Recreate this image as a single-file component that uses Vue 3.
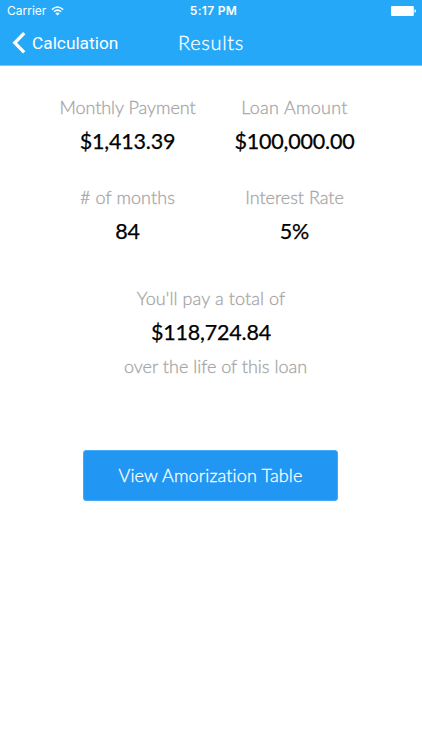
<script setup>
const stats = [
    { label: 'Monthly Payment', value: '$1,413.39', name: 'payment' },
    { label: 'Loan Amount', value: '$100,000.00', name: 'amount' },
    { label: '# of months', value: '84', name: 'months' },
    { label: 'Interest Rate', value: '5%', name: 'rate' }
]
</script>

<template>
    <div class="screen">
        <header class="topBar">
            <div class="statusBar">
                <div class="carrier">
                    <span>Carrier</span>
                    <svg class="wifi" width="13" height="10" viewBox="0 0 13 10">
                        <path d="M0.9 3.6 Q6.5 -1.5 12.1 3.6" />
                        <path d="M2.9 5.8 Q6.5 2.5 10.1 5.8" />
                        <path class="dot" d="M4.4 7.4 Q6.5 5.6 8.6 7.4 L6.5 9.6 Z" />
                    </svg>
                </div>
                <span class="clock">5:17 PM</span>
                <div class="power">
                    <svg width="25" height="10" viewBox="0 0 25 10">
                        <rect x="0" y="0" width="22.8" height="10" rx="1" />
                        <path d="M23.5 3.3 Q25 3.5 25 5 Q25 6.5 23.5 6.7 Z" />
                    </svg>
                </div>
            </div>
            <nav class="navBar">
                <a class="back">
                    <svg width="14" height="22" viewBox="0 0 14 22">
                        <path d="M12.2 1.2 L2.8 10.8 L12.2 20.4" />
                    </svg>
                    <span>Calculation</span>
                </a>
                <h1 class="title">Results</h1>
                <span></span>
            </nav>
        </header>

        <main class="content">
            <section class="stats">
                <div v-for="stat in stats" :key="stat.name" class="stat">
                    <div class="label" :class="stat.name">{{ stat.label }}</div>
                    <div class="value">{{ stat.value }}</div>
                </div>
            </section>

            <section class="total">
                <div class="label before">You'll pay a total of</div>
                <div class="value">$118,724.84</div>
                <div class="label after">over the life of this loan</div>
            </section>

            <button class="tableButton">View Amorization Table</button>
        </main>
    </div>
</template>

<style>
body {
    background: #fff;
}
</style>

<style scoped>
.screen {
    height: 750px;
    overflow: hidden;
    background: #fff;
    font-family: Lato, "Liberation Sans", sans-serif;
}

.topBar {
    box-sizing: border-box;
    height: 66px;
    background: #25a8f7;
    border-bottom: 1px solid #7accfb;
    color: #fff;
}
.statusBar {
    height: 21px;
    padding: 0 6px 0 7px;
    display: grid;
    grid-template-columns: 1fr auto 1fr;
    align-items: center;
    font-family: Inter, sans-serif;
    font-size: 12px;
}
.carrier {
    display: flex;
    align-items: center;
    gap: 5px;
    letter-spacing: 0;
}
.wifi {
    fill: none;
    stroke: #fff;
    stroke-width: 1.5;
}
.wifi .dot {
    fill: #fff;
    stroke: none;
}
.clock {
    padding-left: 4px;
    font-weight: 600;
    letter-spacing: 0.3px;
}
.power {
    display: flex;
    justify-content: flex-end;
    fill: #fff;
}

.navBar {
    height: 44px;
    padding: 0 12px;
    display: grid;
    grid-template-columns: 1fr auto 1fr;
    align-items: center;
}
.back {
    display: flex;
    align-items: center;
    gap: 6px;
    font-family: Roboto, sans-serif;
    font-size: 17.3px;
}
.back svg {
    fill: none;
    stroke: #fff;
    stroke-width: 3.3;
}
.title {
    margin: 0;
    padding-bottom: 3px;
    font-size: 20px;
    font-weight: 300;
    letter-spacing: 0.7px;
    -webkit-text-stroke: 0.3px #fff;
}

.content {
    display: flex;
    flex-direction: column;
    align-items: center;
    padding: 27px 1px 0 0;
}
.stats {
    display: grid;
    grid-template-columns: 167px 167px;
    row-gap: 22px;
    padding-left: 1px;
}
.stat,
.total {
    text-align: center;
    white-space: nowrap;
}
.label {
    height: 28px;
    line-height: 28px;
    font-size: 18px;
    font-weight: 300;
    color: #a6a6a6;
    -webkit-text-stroke: 0.3px #a6a6a6;
}
.label.payment {
    letter-spacing: -0.05px;
}
.label.amount {
    letter-spacing: 0.3px;
}
.label.months,
.label.before {
    letter-spacing: 0.1px;
}
.label.after {
    padding-left: 9px;
}
.value {
    height: 40px;
    line-height: 40px;
    font-size: 21.5px;
    font-weight: 400;
    color: #000;
    letter-spacing: -0.2px;
    -webkit-text-stroke: 0.25px #000;
}
.total {
    margin-top: 33px;
    padding-left: 1px;
}

.tableButton {
    width: 255px;
    height: 51px;
    margin-top: 70px;
    padding: 0 0 2px;
    border: 1px solid #45a9f6;
    border-radius: 3px;
    background: #2196f3;
    color: #fff;
    font-family: inherit;
    font-size: 18px;
    font-weight: 300;
    letter-spacing: 0.15px;
    -webkit-text-stroke: 0.3px #fff;
}
</style>
